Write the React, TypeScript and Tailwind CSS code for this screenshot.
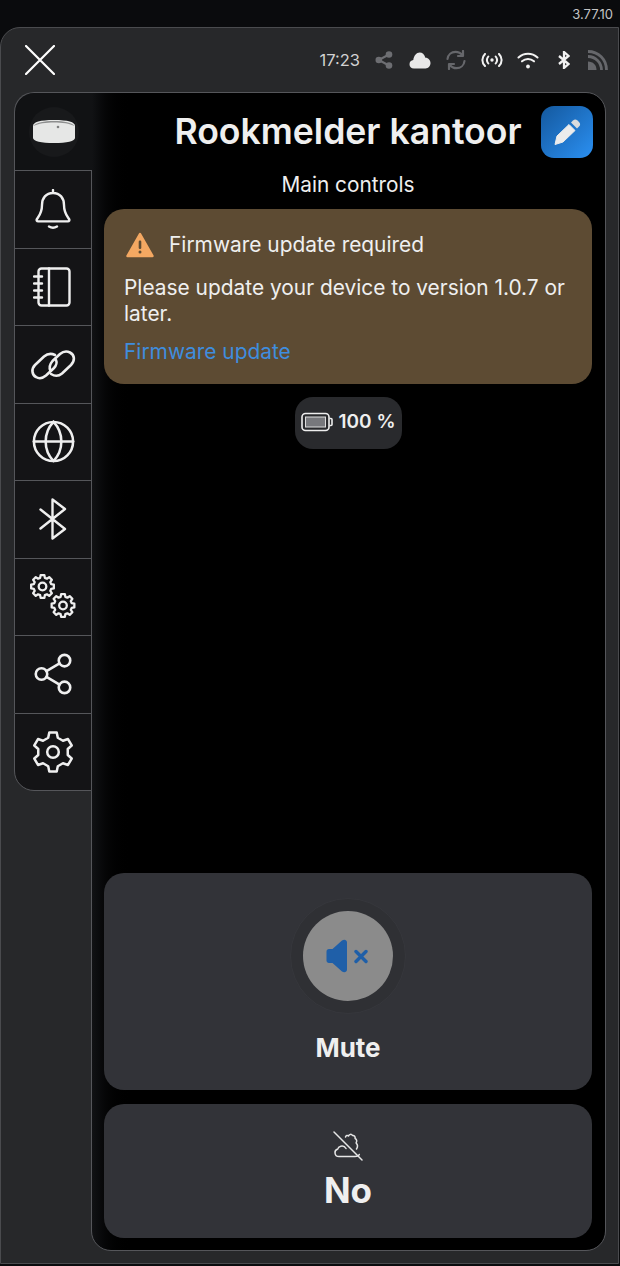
import React from "react";
import { Globe, Share2 } from "lucide-react";

function gear(size: number, cx: number, cy: number, teeth: number, inner: number, topHalf: number, rootHalf: number) {
  const pts: string[] = [];
  for (let i = 0; i < teeth; i++) {
    const a = (i / teeth) * Math.PI * 2 - Math.PI / 2;
    const s = Math.PI / teeth;
    const p = (r: number, t: number) => `${(cx + r * Math.cos(t)).toFixed(2)} ${(cy + r * Math.sin(t)).toFixed(2)}`;
    pts.push(
      `${i === 0 ? "M" : "L"}${p(size, a - s * topHalf)}`,
      `L${p(size, a + s * topHalf)}`,
      `L${p(size * inner, a + s * rootHalf)}`,
      `L${p(size * inner, a + s * (2 - rootHalf))}`
    );
  }
  return pts.join(" ") + " Z";
}

const NotebookIcon = () => (
  <svg width="40" height="40" viewBox="0 0 40 40" fill="none" stroke="currentColor" strokeWidth="2.400" strokeLinecap="round" strokeLinejoin="round">
    <rect x="5.500" y="1.500" width="31" height="37" rx="3" />
    <path d="M16 1.500V38.500" />
    <path d="M1 9.500H9M1 16.500H9M1 23.500H9M1 30.500H9" />
  </svg>
);

const LinkIcon = () => (
  <svg width="60" height="45" viewBox="0 0 60 45" fill="none" stroke="currentColor" strokeWidth="2.600" strokeLinecap="round" strokeLinejoin="round">
    <path d="M32 13C28 11 24 12 21 14.500L12 23C8 27 9 33 13 35C16 37 20 36 23 33.500L31 26C33.500 23.500 34 20 33 18" />
    <path d="M28 32C32 34.500 36 34 39 31.500L48 23C52 19 52 13 47 10.500C44 9 40 9.500 37 12L29.500 19C27 22 26 26 27.500 29" />
  </svg>
);

const BtIcon = () => (
  <svg width="30" height="42" viewBox="0 0 30 42" fill="none" stroke="currentColor" strokeWidth="2.400" strokeLinecap="round" strokeLinejoin="round">
    <path d="M2.500 11.500 27 31 14.500 40.500V1.500L27 11 2.500 30.500" />
  </svg>
);

const Cogs = () => (
  <svg width="46" height="46" viewBox="0 0 46 46" fill="none" stroke="currentColor" strokeWidth="2.300" strokeLinejoin="round">
    <path d={gear(11.500, 12.500, 12.500, 8, 0.78, 0.42, 0.68)} />
    <circle cx="12.500" cy="12.500" r="3.800" />
    <path d={gear(11.500, 33, 31.500, 8, 0.78, 0.42, 0.68)} />
    <circle cx="33" cy="31.500" r="3.800" />
  </svg>
);

const BigGear = () => (
  <svg width="42" height="42" viewBox="0 0 42 42" fill="none" stroke="currentColor" strokeWidth="2.500" strokeLinejoin="round">
    <path d={gear(19.800, 21, 21, 6, 0.76, 0.36, 0.62)} />
    <circle cx="21" cy="21" r="5.800" />
  </svg>
);

const BellIcon = () => (
  <svg width="36" height="40" viewBox="0 0 36 40" fill="none" stroke="currentColor" strokeWidth="2.400" strokeLinecap="round" strokeLinejoin="round">
    <path d="M18 1v3M18 4c-7 0-11 5-11 12 0 8-3 11-5 14-.8 1.200-.2 2.400 1.200 2.400h29.600c1.400 0 2-1.200 1.200-2.400-2-3-5-6-5-14 0-7-4-12-11-12Z" />
    <path d="M14 37.500c2.500 1.500 5.500 1.500 8 0" />
  </svg>
);

const CloseIcon = () => (
  <svg width="30" height="30" viewBox="0 0 30 30" fill="none" stroke="#ffffff" strokeWidth="2.200" strokeLinecap="round">
    <path d="M1 1 29 29M29 1 1 29" />
  </svg>
);

const PencilIcon = () => (
  <svg width="30" height="30" viewBox="0 0 30 30">
    <path d="M3 27.500 5 19 17 7.500 23 13.500 11 25Z" fill="#ececec" stroke="#ececec" strokeWidth="1" strokeLinejoin="round" />
    <path d="M19 5.500l2-2c1.500-1.500 3-1.500 4.500 0l1.500 1.500c1.500 1.500 1.500 3 0 4.500l-2 2Z" fill="#d9dbdd" />
  </svg>
);

const ShareTop = () => (
  <svg width="18" height="18" viewBox="0 0 18 18" fill="#6d6e72">
    <circle cx="14" cy="3.500" r="3.300" />
    <circle cx="3.800" cy="9" r="3.300" />
    <circle cx="14" cy="14.500" r="3.300" />
    <path d="M3.800 9 14 3.500M3.800 9 14 14.500" stroke="#6d6e72" strokeWidth="2" />
  </svg>
);

const CloudTop = () => (
  <svg width="22" height="18" viewBox="0 0 22 18" fill="#e8e8e8">
    <path d="M5 17.500C2 17.500.5 15.500.5 13.200c0-2.400 1.700-4 3.800-4.200C4.700 5 7.500 1.500 10.700 1.500c2.600 0 4.700 1.800 5.700 5.200 3-.1 5.100 2.500 5.100 5.400 0 3-2 5.400-5 5.400Z" />
  </svg>
);

const SyncTop = () => (
  <svg width="20" height="20" viewBox="0 0 20 20" fill="none" stroke="#66676b" strokeWidth="2.200" strokeLinecap="round" strokeLinejoin="round">
    <path d="M1.500 9C2 4.500 5.500 1.800 9.500 1.800c3 0 5.200 1.200 7 3.700M17 1v5h-5" />
    <path d="M18.500 11c-.5 4.500-4 7.200-8 7.200-3 0-5.200-1.200-7-3.700M3 19v-5h5" />
  </svg>
);

const BroadcastTop = () => (
  <svg width="22" height="14" viewBox="0 0 22 14" fill="none" stroke="#f2f2f2" strokeWidth="2" strokeLinecap="round">
    <circle cx="11" cy="7" r="1.700" fill="#f2f2f2" stroke="none" />
    <path d="M7.300 3.500c-1.600 2-1.600 5 0 7M14.700 3.500c1.600 2 1.600 5 0 7M4 1c-3.500 3.500-3.500 8.500 0 12M18 1c3.500 3.500 3.500 8.500 0 12" />
  </svg>
);

const WifiTop = () => (
  <svg width="22" height="17" viewBox="0 0 22 17" fill="none" stroke="#f2f2f2" strokeWidth="2.100" strokeLinecap="round">
    <path d="M1.500 5.500c5.500-5 13.500-5 19 0M5 9.300c3.500-3 8.500-3 12 0" />
    <circle cx="11" cy="14.500" r="1.900" fill="#f2f2f2" stroke="none" />
  </svg>
);

const BtTop = () => (
  <svg width="12" height="18" viewBox="0 0 12 18" fill="none" stroke="#f2f2f2" strokeWidth="2.300">
    <path d="M1 5 10.500 13 6 17V1l4.500 4L1 13" />
  </svg>
);

const RssTop = () => (
  <svg width="20" height="20" viewBox="0 0 20 20" fill="none">
    <path d="M0 20v-8.500c5 0 8.500 3.500 8.500 8.500Z" fill="#66676b" />
    <path d="M0 6.500c7.500 0 13.500 6 13.500 13.500M0 1.500c10.500 0 18.500 8 18.500 18.500" stroke="#66676b" strokeWidth="2.800" />
  </svg>
);

const BatteryIcon = () => (
  <svg width="32" height="20" viewBox="0 0 32 20" fill="none">
    <rect x="1" y="1.500" width="27" height="17" rx="3.500" stroke="#eeeeee" strokeWidth="1.600" />
    <rect x="4.500" y="5" width="20" height="10" fill="#77787c" stroke="#dddddd" strokeWidth="1" />
    <path d="M28.500 6.500h1.500a1 1 0 0 1 1 1v5a1 1 0 0 1-1 1h-1.500" stroke="#eeeeee" strokeWidth="1.600" />
  </svg>
);

const WarnIcon = () => (
  <svg width="28" height="26" viewBox="0 0 28 26">
    <path d="M14 2 26.500 24H1.500Z" fill="#f4a862" stroke="#f4a862" strokeWidth="2.500" strokeLinejoin="round" />
    <rect x="12.700" y="8.500" width="2.600" height="8.500" rx="1.200" fill="#5d4b33" />
    <circle cx="14" cy="20" r="1.500" fill="#5d4b33" />
  </svg>
);

const MuteIcon = () => (
  <svg width="42" height="34" viewBox="0 0 42 34" fill="#1f5fa8" className="mr-[3px]">
    <path d="M.5 12.500c0-1.500 1-2.500 2.500-2.500h3.500L16 1.500c2-1.500 5-.8 5 2v27c0 2.800-3 3.500-5 2L6.500 24H3c-1.500 0-2.500-1-2.500-2.500Z" />
    <path d="M30 12.500l10 10M40 12.500l-10 10" stroke="#1f5fa8" strokeWidth="3.400" fill="none" strokeLinecap="round" />
  </svg>
);

const NoSmokeIcon = () => (
  <svg width="30" height="30" viewBox="0 0 30 30" fill="none" stroke="#e6e6e6" strokeWidth="1.500" strokeLinecap="round" strokeLinejoin="round">
    <path d="M1 1l28 28" />
    <path d="M13 17.500c-1-1.800-3-2.800-5.200-2.300-1.800.4-2.800 1.600-3 2.800C2.800 18.600 1.800 20.200 2 22c.2 2 1.800 3.500 4 3.500h16c2.300 0 3.800-.8 4.300-2" />
    <path d="M12.500 6c.5-1.500 2-2 3-1 .5-1.800 3-2.300 4-.5 1.800-.3 3 1 2.600 3 1.800.8 2 3 1 4.500 1.500 1.500 1.700 4 .4 6" />
  </svg>
);

const Detector = () => (
  <svg width="44" height="26" viewBox="0 0 44 26">
    <path d="M1 7C1 3 8 1 22 1s21 2 21 6v12c0 3-8 5-21 5S1 22 1 19Z" fill="#e6e7e6" />
    <path d="M1.500 7C4 3.500 12 2 22 2s18 1.500 20.500 5C38 4.500 30 3.500 22 3.500S6 4.500 1.500 7Z" fill="#8d8e8e" />
    <circle cx="26" cy="8" r="1.300" fill="#7f8080" />
  </svg>
);

const sideItems = [
  <BellIcon key="1" />,
  <NotebookIcon key="2" />,
  <LinkIcon key="3" />,
  <Globe key="4" size={47} strokeWidth={1.300} />,
  <BtIcon key="5" />,
  <Cogs key="6" />,
  <Share2 key="7" size={46} strokeWidth={1.350} />,
  <BigGear key="8" />,
];

export default function App() {
  return (
    <div className="h-[1266px] w-[620px] overflow-hidden bg-[#0a0b0d] flex flex-col text-[#efefef] font-['Inter',sans-serif]">
      <div className="h-[27px] flex items-center justify-end pr-[7px] pt-[3px] text-[13px] text-[#c4c4c4]">3.77.10</div>
      <div className="flex-1 min-h-0 mr-[1px] mb-[2px] flex flex-col rounded-tl-[20px] border-t border-l border-r border-b border-[#4a4b4e] bg-[#27282a]">
        <div className="h-[64px] flex items-center pl-[24px] pr-[10px] shrink-0">
          <CloseIcon />
          <div className="ml-auto flex items-center">
            <span className="text-[16.500px] text-[#d2d2d2] mr-[15px]">17:23</span>
            <div className="mr-[16px]"><ShareTop /></div>
            <div className="mr-[15px]"><CloudTop /></div>
            <div className="mr-[15px]"><SyncTop /></div>
            <div className="mr-[14px]"><BroadcastTop /></div>
            <div className="mr-[19px]"><WifiTop /></div>
            <div className="mr-[18px]"><BtTop /></div>
            <RssTop />
          </div>
        </div>
        <div className="flex-1 min-h-0 flex pl-[13px] pr-[12px] pb-[12px]">
          <div className="w-[78px] shrink-0 self-start flex flex-col relative z-10 -mr-[1px]">
            <div className="h-[78px] rounded-tl-[20px] border-t border-l border-[#55565a] bg-[#111214] flex items-center justify-center">
              <div className="h-[50px] w-[50px] rounded-full bg-[#18191b] flex items-center justify-center"><Detector /></div>
            </div>
            {sideItems.map((icon, i) => (
              <div
                key={i}
                className={`border-t border-l border-r border-[#55565a] bg-[#141416] flex items-center justify-center ${i === sideItems.length - 1 ? "h-[78.500px] rounded-bl-[20px] border-b" : "h-[77.500px]"}`}
              >
                {icon}
              </div>
            ))}
          </div>
          <div className="flex-1 min-w-0 flex flex-col rounded-tr-[20px] rounded-b-[20px] border border-[#55565a] bg-gradient-to-r from-[#111214] to-black to-[8%] pl-[12px] pr-[13px] pb-[12px] relative">
            <div className="h-[78px] flex items-center justify-center shrink-0 text-[35.600px] font-semibold">Rookmelder kantoor</div>
            <button className="absolute right-[12px] top-[13px] h-[52px] w-[52px] rounded-[13px] bg-gradient-to-br from-[#14599f] to-[#2b90f2] flex items-center justify-center">
              <PencilIcon />
            </button>
            <div className="text-center text-[20.800px] leading-[28px]">Main controls</div>
            <div className="mt-[10px] h-[175px] rounded-[20px] bg-[#5d4b33] px-[20px] pt-[22px] shrink-0">
              <div className="flex items-center gap-[15px] pl-[2px] h-[28px]">
                <WarnIcon />
                <span className="text-[20.900px]">Firmware update required</span>
              </div>
              <div className="mt-[16px] text-[20.900px] leading-[26px]">Please update your device to version 1.0.7 or later.</div>
              <div className="mt-[12px] text-[20.900px] leading-[26px] text-[#3f8dde]">Firmware update</div>
            </div>
            <div className="mt-[13px] self-center h-[52px] w-[107px] rounded-[18px] bg-[#292a2d] flex items-center justify-center gap-[6px] pb-[2px] font-semibold text-[19px]">
              <BatteryIcon />
              <span>100 %</span>
            </div>
            <div className="flex-1" />
            <div className="h-[217px] rounded-[20px] bg-[#323338] flex flex-col items-center pt-[25px] shrink-0">
              <div className="h-[116px] w-[116px] rounded-full border border-[#36373c] bg-[#2f3034] flex items-center justify-center">
                <div className="h-[90px] w-[90px] rounded-full bg-[#8b8b8b] flex items-center justify-center"><MuteIcon /></div>
              </div>
              <div className="mt-[18px] text-[26px] font-bold leading-[32px]">Mute</div>
            </div>
            <div className="mt-[14px] h-[134px] rounded-[20px] bg-[#323338] flex flex-col items-center pt-[27px] shrink-0">
              <NoSmokeIcon />
              <div className="text-[35px] font-bold leading-[44px] mt-[7px]">No</div>
            </div>
          </div>
        </div>
      </div>
    </div>
  );
}
